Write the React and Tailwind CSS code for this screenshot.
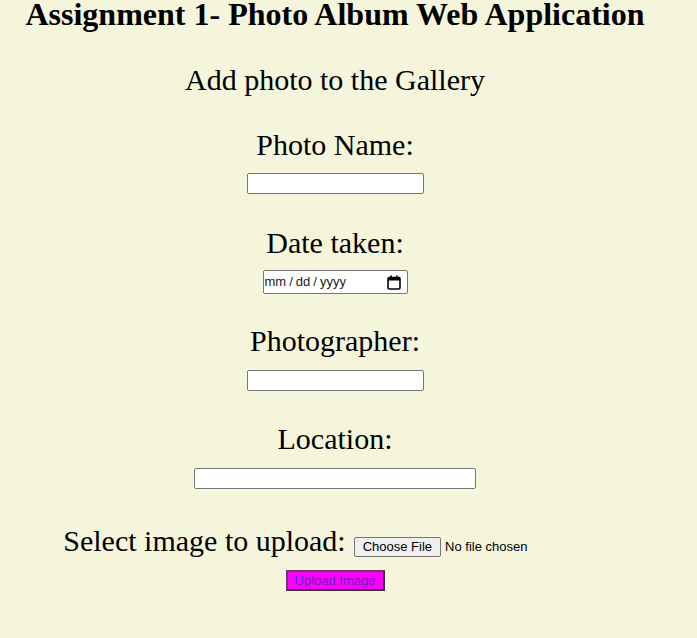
import React from "react";

const serif = { fontFamily: '"Liberation Serif", "Times New Roman", serif' };
const sans = { fontFamily: '"Liberation Sans", Arial, sans-serif' };

function TextBox({ w }) {
  return (
    <div
      className={`h-[21px] ${w} bg-white border border-[#767676] rounded-[2px]`}
    />
  );
}

function CalendarIcon() {
  return (
    <svg width="14" height="15" viewBox="0 0 14 15" className="block">
      <rect x="1" y="2.5" width="12" height="11.5" rx="1.2" fill="none" stroke="#000" strokeWidth="1.6" />
      <rect x="1" y="2.5" width="12" height="3" fill="#000" />
      <rect x="3.4" y="0.5" width="1.6" height="3" fill="#000" />
      <rect x="9" y="0.5" width="1.6" height="3" fill="#000" />
    </svg>
  );
}

export default function App() {
  return (
    <div
      className="w-[697px] h-[638px] bg-[#f5f5dc] text-black overflow-hidden"
      style={serif}
    >
      <div className="w-[670px] flex flex-col items-center">
        <h1 className="text-[32px] font-bold leading-[28px] whitespace-nowrap">
          Assignment 1- Photo Album Web Application
        </h1>
        <div className="text-[30px] leading-[34px] mt-[35px]">Add photo to the Gallery</div>

        <div className="text-[30px] leading-[34px] mt-[31px]">Photo Name:</div>
        <div className="mt-[11px]">
          <TextBox w="w-[177px]" />
        </div>

        <div className="text-[30px] leading-[34px] mt-[32px]">Date taken:</div>
        <div className="mt-[10px] w-[145px] h-[24px] bg-white border border-[#767676] rounded-[2px] flex items-center pl-[1px] pr-[6px] justify-between">
          <span className="flex items-center text-[13px] text-[#202020]" style={sans}>
            <span>mm</span>
            <span className="px-[3px]">/</span>
            <span>dd</span>
            <span className="px-[3px]">/</span>
            <span>yyyy</span>
          </span>
          <CalendarIcon />
        </div>

        <div className="text-[30px] leading-[34px] mt-[30px]">Photographer:</div>
        <div className="mt-[12px]">
          <TextBox w="w-[177px]" />
        </div>

        <div className="text-[30px] leading-[34px] mt-[31px]">Location:</div>
        <div className="mt-[12px]">
          <TextBox w="w-[282px]" />
        </div>

        <div className="mt-[35px] flex items-baseline whitespace-nowrap">
          <span className="text-[30px] leading-[34px]">Select image to upload:</span>
          <span
            className="ml-[8px] w-[253px] inline-flex items-center text-[13px]"
            style={sans}
          >
            <span className="px-[8px] h-[20px] leading-[18px] bg-[#efefef] border border-[#767676] rounded-[2px] text-black">
              Choose File
            </span>
            <span className="ml-[4px] text-black">No file chosen</span>
          </span>
        </div>

        <div className="mt-[10px]">
          <button
            className="w-[99px] h-[21px] bg-[#ff00ff] text-[#6a1fc0] text-[13px] leading-[17px] border-2 border-[#3a2a3a] border-t-[#6a3a6a] border-l-[#6a3a6a]"
            style={sans}
          >
            Upload Image
          </button>
        </div>
      </div>
    </div>
  );
}
